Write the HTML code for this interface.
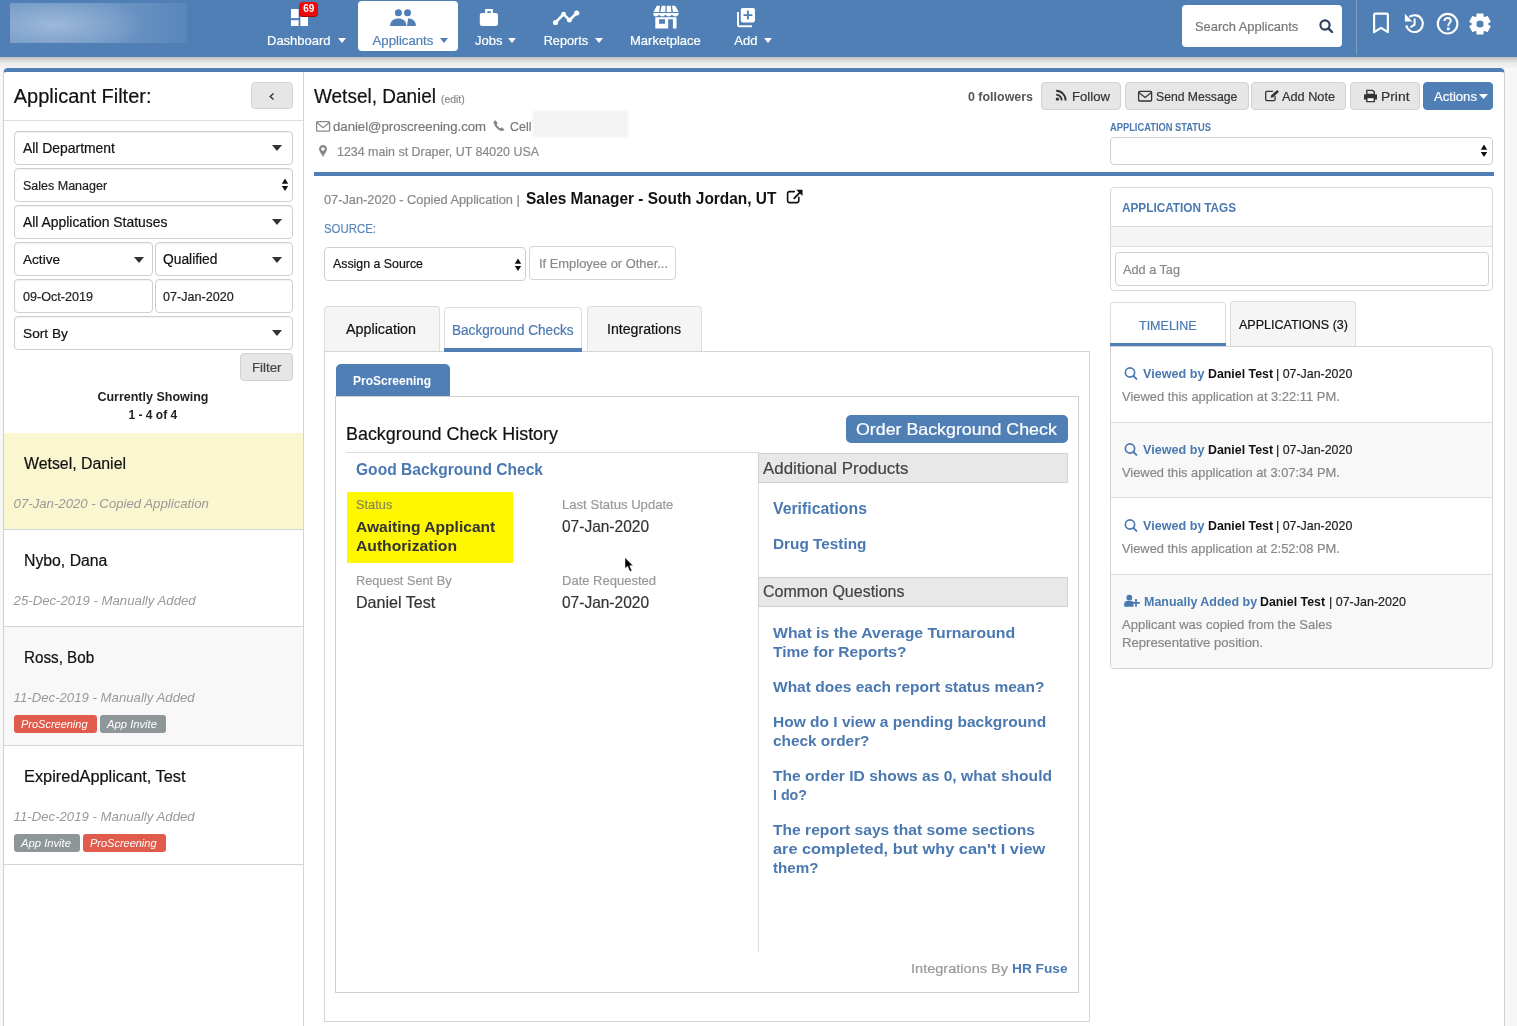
<!DOCTYPE html><html><head><meta charset="utf-8"><style>
div{-webkit-text-stroke:0.2px currentColor}
body{will-change:transform}
html,body{margin:0;padding:0;width:1517px;height:1026px;overflow:hidden;background:#f7f7f7;font-family:"Liberation Sans",sans-serif;position:relative}
</style></head><body>
<div style="position:absolute;left:0px;top:0px;width:1517px;height:57px;background:#4f7fb5"></div>
<div style="position:absolute;left:0px;top:57px;width:1517px;height:11px;background:linear-gradient(#c2c2c2,#ececec 60%,#f3f3f3)"></div>
<div style="position:absolute;left:10px;top:3px;width:177px;height:40px;background:radial-gradient(ellipse 90px 30px at 45px 22px,rgba(200,215,235,0.55),rgba(170,195,225,0.35) 60%,rgba(140,175,215,0.12) 100%),linear-gradient(90deg,rgba(180,200,230,0.3),rgba(160,185,220,0.3) 60%,rgba(120,160,210,0.05))"></div>
<div style="position:absolute;left:3px;top:68px;width:1502px;height:958px;background:#fff;border-top:4px solid #4f7fb5;border-left:1px solid #d0d0d0;border-right:1px solid #d0d0d0;border-radius:5px 5px 0 0;box-sizing:border-box"></div>
<div style="position:absolute;left:358px;top:1px;width:100px;height:50px;background:#fff;border-radius:4px"></div>
<div style="position:absolute;left:267px;top:34.00px;font-size:13px;line-height:13px;color:#fff;font-weight:normal;font-style:normal;white-space:nowrap;font-family:'Liberation Sans', sans-serif;">Dashboard</div>
<svg style="position:absolute;left:337.5px;top:38px;" width="8" height="5" viewBox="0 0 8 5"><path d="M0 0H8L4.0 5Z" fill="#fff"/></svg>
<div style="position:absolute;left:372.5px;top:34.00px;font-size:13.2px;line-height:13.2px;color:#4f7fb5;font-weight:normal;font-style:normal;white-space:nowrap;font-family:'Liberation Sans', sans-serif;">Applicants</div>
<svg style="position:absolute;left:440px;top:38px;" width="8" height="5" viewBox="0 0 8 5"><path d="M0 0H8L4.0 5Z" fill="#4f7fb5"/></svg>
<div style="position:absolute;left:475px;top:34.00px;font-size:13px;line-height:13px;color:#fff;font-weight:normal;font-style:normal;white-space:nowrap;font-family:'Liberation Sans', sans-serif;">Jobs</div>
<svg style="position:absolute;left:508px;top:38px;" width="8" height="5" viewBox="0 0 8 5"><path d="M0 0H8L4.0 5Z" fill="#fff"/></svg>
<div style="position:absolute;left:543.7px;top:35.00px;font-size:12.7px;line-height:12.7px;color:#fff;font-weight:normal;font-style:normal;white-space:nowrap;font-family:'Liberation Sans', sans-serif;">Reports</div>
<svg style="position:absolute;left:594.5px;top:38px;" width="8" height="5" viewBox="0 0 8 5"><path d="M0 0H8L4.0 5Z" fill="#fff"/></svg>
<div style="position:absolute;left:630px;top:34.00px;font-size:13px;line-height:13px;color:#fff;font-weight:normal;font-style:normal;white-space:nowrap;font-family:'Liberation Sans', sans-serif;">Marketplace</div>
<div style="position:absolute;left:734.3px;top:34.00px;font-size:13px;line-height:13px;color:#fff;font-weight:normal;font-style:normal;white-space:nowrap;font-family:'Liberation Sans', sans-serif;">Add</div>
<svg style="position:absolute;left:763.5px;top:38px;" width="8" height="5" viewBox="0 0 8 5"><path d="M0 0H8L4.0 5Z" fill="#fff"/></svg>
<div style="position:absolute;left:1182px;top:5px;width:160px;height:42px;background:#fff;border-radius:4px"></div>
<div style="position:absolute;left:1195px;top:21.00px;font-size:12.9px;line-height:12.9px;color:#777;font-weight:normal;font-style:normal;white-space:nowrap;font-family:'Liberation Sans', sans-serif;">Search Applicants</div>
<div style="position:absolute;left:1356px;top:0px;width:1px;height:55px;background:rgba(255,255,255,0.25)"></div>
<div style="position:absolute;left:303px;top:72px;width:1px;height:954px;background:#d5d5d5"></div>
<div style="position:absolute;left:13.7px;top:86.00px;font-size:20px;line-height:20px;color:#111;font-weight:normal;font-style:normal;white-space:nowrap;font-family:'Liberation Sans', sans-serif;">Applicant Filter:</div>
<div style="position:absolute;left:251px;top:82px;width:42px;height:27px;background:#e6e6e6;border:1px solid #d4d4d4;border-radius:4px;box-sizing:border-box"></div>
<div style="position:absolute;left:4px;top:120px;width:299px;height:1px;background:#ddd"></div>
<div style="position:absolute;left:14px;top:131px;width:279px;height:34px;background:#fff;border:1px solid #cfcfcf;border-radius:4px;box-sizing:border-box;box-shadow:inset 0 1px 1px rgba(0,0,0,0.06)"></div>
<div style="position:absolute;left:23px;top:142.00px;font-size:13.9px;line-height:13.9px;color:#111;font-weight:normal;font-style:normal;white-space:nowrap;font-family:'Liberation Sans', sans-serif;">All Department</div>
<svg style="position:absolute;left:271.5px;top:145px;" width="10" height="6" viewBox="0 0 10 6"><path d="M0 0H10L5.0 6Z" fill="#333"/></svg>
<div style="position:absolute;left:14px;top:168px;width:279px;height:34px;background:#fff;border:1px solid #cfcfcf;border-radius:4px;box-sizing:border-box;box-shadow:inset 0 1px 1px rgba(0,0,0,0.06)"></div>
<div style="position:absolute;left:23px;top:180.00px;font-size:12.5px;line-height:12.5px;color:#222;font-weight:normal;font-style:normal;white-space:nowrap;font-family:'Liberation Sans', sans-serif;">Sales Manager</div>
<div style="position:absolute;left:14px;top:205px;width:279px;height:34px;background:#fff;border:1px solid #cfcfcf;border-radius:4px;box-sizing:border-box;box-shadow:inset 0 1px 1px rgba(0,0,0,0.06)"></div>
<div style="position:absolute;left:23px;top:216.00px;font-size:13.9px;line-height:13.9px;color:#111;font-weight:normal;font-style:normal;white-space:nowrap;font-family:'Liberation Sans', sans-serif;">All Application Statuses</div>
<svg style="position:absolute;left:271.5px;top:219px;" width="10" height="6" viewBox="0 0 10 6"><path d="M0 0H10L5.0 6Z" fill="#333"/></svg>
<div style="position:absolute;left:14px;top:242px;width:139px;height:34px;background:#fff;border:1px solid #cfcfcf;border-radius:4px;box-sizing:border-box;box-shadow:inset 0 1px 1px rgba(0,0,0,0.06)"></div>
<div style="position:absolute;left:23px;top:253.00px;font-size:13.6px;line-height:13.6px;color:#111;font-weight:normal;font-style:normal;white-space:nowrap;font-family:'Liberation Sans', sans-serif;">Active</div>
<svg style="position:absolute;left:133.5px;top:256.5px;" width="10" height="6" viewBox="0 0 10 6"><path d="M0 0H10L5.0 6Z" fill="#333"/></svg>
<div style="position:absolute;left:155px;top:242px;width:138px;height:34px;background:#fff;border:1px solid #cfcfcf;border-radius:4px;box-sizing:border-box;box-shadow:inset 0 1px 1px rgba(0,0,0,0.06)"></div>
<div style="position:absolute;left:163px;top:253.00px;font-size:13.8px;line-height:13.8px;color:#111;font-weight:normal;font-style:normal;white-space:nowrap;font-family:'Liberation Sans', sans-serif;">Qualified</div>
<svg style="position:absolute;left:271.5px;top:256.5px;" width="10" height="6" viewBox="0 0 10 6"><path d="M0 0H10L5.0 6Z" fill="#333"/></svg>
<div style="position:absolute;left:14px;top:279px;width:139px;height:34px;background:#fff;border:1px solid #cfcfcf;border-radius:4px;box-sizing:border-box;box-shadow:inset 0 1px 1px rgba(0,0,0,0.06)"></div>
<div style="position:absolute;left:23px;top:291.00px;font-size:12.6px;line-height:12.6px;color:#222;font-weight:normal;font-style:normal;white-space:nowrap;font-family:'Liberation Sans', sans-serif;">09-Oct-2019</div>
<div style="position:absolute;left:155px;top:279px;width:138px;height:34px;background:#fff;border:1px solid #cfcfcf;border-radius:4px;box-sizing:border-box;box-shadow:inset 0 1px 1px rgba(0,0,0,0.06)"></div>
<div style="position:absolute;left:163px;top:291.00px;font-size:12.6px;line-height:12.6px;color:#222;font-weight:normal;font-style:normal;white-space:nowrap;font-family:'Liberation Sans', sans-serif;">07-Jan-2020</div>
<div style="position:absolute;left:14px;top:316px;width:279px;height:34px;background:#fff;border:1px solid #cfcfcf;border-radius:4px;box-sizing:border-box;box-shadow:inset 0 1px 1px rgba(0,0,0,0.06)"></div>
<div style="position:absolute;left:23px;top:327.00px;font-size:13.7px;line-height:13.7px;color:#111;font-weight:normal;font-style:normal;white-space:nowrap;font-family:'Liberation Sans', sans-serif;">Sort By</div>
<svg style="position:absolute;left:271.5px;top:330px;" width="10" height="6" viewBox="0 0 10 6"><path d="M0 0H10L5.0 6Z" fill="#333"/></svg>
<div style="position:absolute;left:240px;top:353px;width:53px;height:28px;background:#e6e6e6;border:1px solid #d0d0d0;border-radius:4px;box-sizing:border-box"></div>
<div style="position:absolute;left:252px;top:361.00px;font-size:13.3px;line-height:13.3px;color:#444;font-weight:normal;font-style:normal;white-space:nowrap;font-family:'Liberation Sans', sans-serif;">Filter</div>
<div style="position:absolute;left:97.4px;top:391.00px;font-size:12.5px;line-height:12.5px;color:#222;font-weight:bold;font-style:normal;-webkit-text-stroke:0;white-space:nowrap;font-family:'Liberation Sans', sans-serif;">Currently Showing</div>
<div style="position:absolute;left:128.5px;top:409.00px;font-size:12px;line-height:12px;color:#222;font-weight:bold;font-style:normal;-webkit-text-stroke:0;white-space:nowrap;font-family:'Liberation Sans', sans-serif;">1 - 4 of 4</div>
<div style="position:absolute;left:4px;top:433px;width:299px;height:96px;background:#faf6cf"></div>
<div style="position:absolute;left:4px;top:529px;width:299px;height:1px;background:#d5d5d5"></div>
<div style="position:absolute;left:4px;top:626px;width:299px;height:1px;background:#d5d5d5"></div>
<div style="position:absolute;left:4px;top:627px;width:299px;height:118px;background:#f8f8f8"></div>
<div style="position:absolute;left:4px;top:745px;width:299px;height:1px;background:#d5d5d5"></div>
<div style="position:absolute;left:4px;top:864px;width:299px;height:1px;background:#d5d5d5"></div>
<div style="position:absolute;left:23.8px;top:456.00px;font-size:16px;line-height:16px;color:#111;font-weight:normal;font-style:normal;white-space:nowrap;font-family:'Liberation Sans', sans-serif;transform:scaleX(0.9916);transform-origin:0 0;">Wetsel, Daniel</div>
<div style="position:absolute;left:13.6px;top:497.00px;font-size:13.2px;line-height:13.2px;color:#999;font-weight:normal;font-style:italic;-webkit-text-stroke:0;white-space:nowrap;font-family:'Liberation Sans', sans-serif;">07-Jan-2020 - Copied Application</div>
<div style="position:absolute;left:23.8px;top:553.00px;font-size:16px;line-height:16px;color:#111;font-weight:normal;font-style:normal;white-space:nowrap;font-family:'Liberation Sans', sans-serif;transform:scaleX(0.9871);transform-origin:0 0;">Nybo, Dana</div>
<div style="position:absolute;left:13.6px;top:594.00px;font-size:13.2px;line-height:13.2px;color:#999;font-weight:normal;font-style:italic;-webkit-text-stroke:0;white-space:nowrap;font-family:'Liberation Sans', sans-serif;">25-Dec-2019 - Manually Added</div>
<div style="position:absolute;left:23.8px;top:650.00px;font-size:16px;line-height:16px;color:#111;font-weight:normal;font-style:normal;white-space:nowrap;font-family:'Liberation Sans', sans-serif;transform:scaleX(0.9510);transform-origin:0 0;">Ross, Bob</div>
<div style="position:absolute;left:13.6px;top:691.00px;font-size:13.2px;line-height:13.2px;color:#999;font-weight:normal;font-style:italic;-webkit-text-stroke:0;white-space:nowrap;font-family:'Liberation Sans', sans-serif;">11-Dec-2019 - Manually Added</div>
<div style="position:absolute;left:23.8px;top:769.00px;font-size:16px;line-height:16px;color:#111;font-weight:normal;font-style:normal;white-space:nowrap;font-family:'Liberation Sans', sans-serif;transform:scaleX(1.0227);transform-origin:0 0;">ExpiredApplicant, Test</div>
<div style="position:absolute;left:13.6px;top:810.00px;font-size:13.2px;line-height:13.2px;color:#999;font-weight:normal;font-style:italic;-webkit-text-stroke:0;white-space:nowrap;font-family:'Liberation Sans', sans-serif;">11-Dec-2019 - Manually Added</div>
<div style="position:absolute;left:14px;top:715px;width:83px;height:18px;background:#e15b4d;border-radius:3px"></div>
<div style="position:absolute;left:21.3px;top:719.00px;font-size:11.5px;line-height:11.5px;color:#fff;font-weight:normal;font-style:italic;-webkit-text-stroke:0;white-space:nowrap;font-family:'Liberation Sans', sans-serif;transform:scaleX(0.9543);transform-origin:0 0;">ProScreening</div>
<div style="position:absolute;left:100px;top:715px;width:66px;height:18px;background:#8f9697;border-radius:3px"></div>
<div style="position:absolute;left:107.3px;top:719.00px;font-size:11.5px;line-height:11.5px;color:#fff;font-weight:normal;font-style:italic;-webkit-text-stroke:0;white-space:nowrap;font-family:'Liberation Sans', sans-serif;transform:scaleX(0.9776);transform-origin:0 0;">App Invite</div>
<div style="position:absolute;left:14px;top:834px;width:66px;height:18px;background:#8f9697;border-radius:3px"></div>
<div style="position:absolute;left:21.3px;top:838.00px;font-size:11.5px;line-height:11.5px;color:#fff;font-weight:normal;font-style:italic;-webkit-text-stroke:0;white-space:nowrap;font-family:'Liberation Sans', sans-serif;transform:scaleX(0.9776);transform-origin:0 0;">App Invite</div>
<div style="position:absolute;left:83px;top:834px;width:83px;height:18px;background:#e15b4d;border-radius:3px"></div>
<div style="position:absolute;left:90.3px;top:838.00px;font-size:11.5px;line-height:11.5px;color:#fff;font-weight:normal;font-style:italic;-webkit-text-stroke:0;white-space:nowrap;font-family:'Liberation Sans', sans-serif;transform:scaleX(0.9543);transform-origin:0 0;">ProScreening</div>
<div style="position:absolute;left:314.2px;top:87.00px;font-size:19.5px;line-height:19.5px;color:#111;font-weight:normal;font-style:normal;white-space:nowrap;font-family:'Liberation Sans', sans-serif;transform:scaleX(0.9732);transform-origin:0 0;">Wetsel, Daniel</div>
<div style="position:absolute;left:441.4px;top:94.00px;font-size:11px;line-height:11px;color:#888;font-weight:normal;font-style:normal;white-space:nowrap;font-family:'Liberation Sans', sans-serif;transform:scaleX(0.9416);transform-origin:0 0;">(edit)</div>
<div style="position:absolute;left:333.2px;top:120.00px;font-size:13.5px;line-height:13.5px;color:#777;font-weight:normal;font-style:normal;white-space:nowrap;font-family:'Liberation Sans', sans-serif;transform:scaleX(0.9743);transform-origin:0 0;">daniel@proscreening.com</div>
<div style="position:absolute;left:509.6px;top:120.00px;font-size:13px;line-height:13px;color:#777;font-weight:normal;font-style:normal;white-space:nowrap;font-family:'Liberation Sans', sans-serif;transform:scaleX(0.9555);transform-origin:0 0;">Cell</div>
<div style="position:absolute;left:533px;top:111px;width:95px;height:26px;background:#f3f3f3;filter:blur(1px)"></div>
<div style="position:absolute;left:336.6px;top:145.00px;font-size:13px;line-height:13px;color:#888;font-weight:normal;font-style:normal;white-space:nowrap;font-family:'Liberation Sans', sans-serif;transform:scaleX(0.9551);transform-origin:0 0;">1234 main st Draper, UT 84020 USA</div>
<div style="position:absolute;left:314px;top:172px;width:1180px;height:4px;background:#4f7fb5"></div>
<div style="position:absolute;left:967.8px;top:91.00px;font-size:12.8px;line-height:12.8px;color:#555;font-weight:bold;font-style:normal;-webkit-text-stroke:0;white-space:nowrap;font-family:'Liberation Sans', sans-serif;transform:scaleX(0.9721);transform-origin:0 0;">0 followers</div>
<div style="position:absolute;left:1041px;top:82px;width:80px;height:28px;background:#e6e6e6;border:1px solid #d2d2d2;border-radius:4px;box-sizing:border-box"></div>
<div style="position:absolute;left:1072px;top:90.00px;font-size:13.2px;line-height:13.2px;color:#333;font-weight:normal;font-style:normal;white-space:nowrap;font-family:'Liberation Sans', sans-serif;transform:scaleX(0.9962);transform-origin:0 0;">Follow</div>
<div style="position:absolute;left:1125px;top:82px;width:124px;height:28px;background:#e6e6e6;border:1px solid #d2d2d2;border-radius:4px;box-sizing:border-box"></div>
<div style="position:absolute;left:1155.7px;top:90.00px;font-size:13px;line-height:13px;color:#333;font-weight:normal;font-style:normal;white-space:nowrap;font-family:'Liberation Sans', sans-serif;transform:scaleX(0.9375);transform-origin:0 0;">Send Message</div>
<div style="position:absolute;left:1251px;top:82px;width:95px;height:28px;background:#e6e6e6;border:1px solid #d2d2d2;border-radius:4px;box-sizing:border-box"></div>
<div style="position:absolute;left:1282.4px;top:90.00px;font-size:13px;line-height:13px;color:#333;font-weight:normal;font-style:normal;white-space:nowrap;font-family:'Liberation Sans', sans-serif;transform:scaleX(0.9778);transform-origin:0 0;">Add Note</div>
<div style="position:absolute;left:1350px;top:82px;width:70px;height:28px;background:#e6e6e6;border:1px solid #d2d2d2;border-radius:4px;box-sizing:border-box"></div>
<div style="position:absolute;left:1380.6px;top:90.00px;font-size:13px;line-height:13px;color:#333;font-weight:normal;font-style:normal;white-space:nowrap;font-family:'Liberation Sans', sans-serif;transform:scaleX(1.0662);transform-origin:0 0;">Print</div>
<div style="position:absolute;left:1423px;top:82px;width:70px;height:28px;background:#4f7fb5;border:1px solid #4f7fb5;border-radius:4px;box-sizing:border-box"></div>
<div style="position:absolute;left:1433.5px;top:90.00px;font-size:13.2px;line-height:13.2px;color:#fff;font-weight:normal;font-style:normal;white-space:nowrap;font-family:'Liberation Sans', sans-serif;transform:scaleX(0.9934);transform-origin:0 0;">Actions</div>
<svg style="position:absolute;left:1478.5px;top:94px;" width="9" height="5" viewBox="0 0 9 5"><path d="M0 0H9L4.5 5Z" fill="#fff"/></svg>
<div style="position:absolute;left:1110.2px;top:122.00px;font-size:11px;line-height:11px;color:#4a78b0;font-weight:bold;font-style:normal;-webkit-text-stroke:0;white-space:nowrap;font-family:'Liberation Sans', sans-serif;transform:scaleX(0.8476);transform-origin:0 0;">APPLICATION STATUS</div>
<div style="position:absolute;left:1110px;top:137px;width:383px;height:28px;background:#fff;border:1px solid #cfcfcf;border-radius:4px;box-sizing:border-box"></div>
<div style="position:absolute;left:324.2px;top:193.00px;font-size:13.2px;line-height:13.2px;color:#888;font-weight:normal;font-style:normal;white-space:nowrap;font-family:'Liberation Sans', sans-serif;transform:scaleX(0.9689);transform-origin:0 0;">07-Jan-2020 - Copied Application |</div>
<div style="position:absolute;left:526px;top:190.00px;font-size:16.5px;line-height:16.5px;color:#111;font-weight:bold;font-style:normal;-webkit-text-stroke:0;white-space:nowrap;font-family:'Liberation Sans', sans-serif;transform:scaleX(0.9353);transform-origin:0 0;">Sales Manager - South Jordan, UT</div>
<div style="position:absolute;left:324.2px;top:222.00px;font-size:13.5px;line-height:13.5px;color:#5a85b8;font-weight:normal;font-style:normal;white-space:nowrap;font-family:'Liberation Sans', sans-serif;transform:scaleX(0.8454);transform-origin:0 0;">SOURCE:</div>
<div style="position:absolute;left:324px;top:247px;width:202px;height:34px;background:#fff;border:1px solid #cfcfcf;border-radius:4px;box-sizing:border-box"></div>
<div style="position:absolute;left:333px;top:257.00px;font-size:13px;line-height:13px;color:#111;font-weight:normal;font-style:normal;white-space:nowrap;font-family:'Liberation Sans', sans-serif;transform:scaleX(0.9507);transform-origin:0 0;">Assign a Source</div>
<div style="position:absolute;left:529px;top:246px;width:147px;height:34px;background:#fff;border:1px solid #d5d5d5;border-radius:4px;box-sizing:border-box"></div>
<div style="position:absolute;left:538.5px;top:257.00px;font-size:13px;line-height:13px;color:#888;font-weight:normal;font-style:normal;white-space:nowrap;font-family:'Liberation Sans', sans-serif;transform:scaleX(0.9919);transform-origin:0 0;">If Employee or Other...</div>
<div style="position:absolute;left:324px;top:306px;width:116px;height:46px;background:#f5f5f5;border:1px solid #ddd;border-bottom:none;border-radius:4px 4px 0 0;box-sizing:border-box"></div>
<div style="position:absolute;left:346px;top:322.00px;font-size:14px;line-height:14px;color:#111;font-weight:normal;font-style:normal;white-space:nowrap;font-family:'Liberation Sans', sans-serif;transform:scaleX(1.0220);transform-origin:0 0;">Application</div>
<div style="position:absolute;left:444px;top:307px;width:138px;height:45px;background:#fff;border:1px solid #ddd;border-bottom:none;border-radius:4px 4px 0 0;box-sizing:border-box"></div>
<div style="position:absolute;left:444px;top:348px;width:138px;height:4px;background:#4f7fb5"></div>
<div style="position:absolute;left:452px;top:323.00px;font-size:14px;line-height:14px;color:#4a78b0;font-weight:normal;font-style:normal;white-space:nowrap;font-family:'Liberation Sans', sans-serif;transform:scaleX(0.9697);transform-origin:0 0;">Background Checks</div>
<div style="position:absolute;left:587px;top:306px;width:115px;height:46px;background:#f5f5f5;border:1px solid #ddd;border-bottom:none;border-radius:4px 4px 0 0;box-sizing:border-box"></div>
<div style="position:absolute;left:607px;top:322.00px;font-size:14px;line-height:14px;color:#111;font-weight:normal;font-style:normal;white-space:nowrap;font-family:'Liberation Sans', sans-serif;transform:scaleX(1.0115);transform-origin:0 0;">Integrations</div>
<div style="position:absolute;left:324px;top:351px;width:766px;height:671px;border:1px solid #d5d5d5;box-sizing:border-box"></div>
<div style="position:absolute;left:444px;top:351px;width:138px;height:1px;background:#4f7fb5"></div>
<div style="position:absolute;left:335.5px;top:364px;width:114.5px;height:33px;background:#4f7fb5;border-radius:5px 5px 0 0"></div>
<div style="position:absolute;left:353.2px;top:375.00px;font-size:12.5px;line-height:12.5px;color:#fff;font-weight:bold;font-style:normal;-webkit-text-stroke:0;white-space:nowrap;font-family:'Liberation Sans', sans-serif;transform:scaleX(0.9597);transform-origin:0 0;">ProScreening</div>
<div style="position:absolute;left:335px;top:396px;width:744px;height:597px;border:1px solid #d0d0d0;box-sizing:border-box"></div>
<div style="position:absolute;left:450px;top:396px;width:629px;height:1px;background:#d0d0d0"></div>
<div style="position:absolute;left:346px;top:426.00px;font-size:17.5px;line-height:17.5px;color:#111;font-weight:normal;font-style:normal;white-space:nowrap;font-family:'Liberation Sans', sans-serif;transform:scaleX(1.0233);transform-origin:0 0;">Background Check History</div>
<div style="position:absolute;left:346px;top:452px;width:413px;height:1px;background:#ddd"></div>
<div style="position:absolute;left:355.7px;top:462.00px;font-size:16px;line-height:16px;color:#4a78b0;font-weight:bold;font-style:normal;-webkit-text-stroke:0;white-space:nowrap;font-family:'Liberation Sans', sans-serif;transform:scaleX(0.9738);transform-origin:0 0;">Good Background Check</div>
<div style="position:absolute;left:347px;top:492px;width:166px;height:71px;background:#fff700"></div>
<div style="position:absolute;left:355.7px;top:498.00px;font-size:13px;line-height:13px;color:#8a8a55;font-weight:normal;font-style:normal;white-space:nowrap;font-family:'Liberation Sans', sans-serif;transform:scaleX(0.9849);transform-origin:0 0;">Status</div>
<div style="position:absolute;left:355.7px;top:519.00px;font-size:15.5px;line-height:15.5px;color:#333;font-weight:bold;font-style:normal;-webkit-text-stroke:0;white-space:nowrap;font-family:'Liberation Sans', sans-serif;transform:scaleX(1.0047);transform-origin:0 0;">Awaiting Applicant</div>
<div style="position:absolute;left:355.7px;top:538.00px;font-size:15.5px;line-height:15.5px;color:#333;font-weight:bold;font-style:normal;-webkit-text-stroke:0;white-space:nowrap;font-family:'Liberation Sans', sans-serif;transform:scaleX(1.0113);transform-origin:0 0;">Authorization</div>
<div style="position:absolute;left:561.6px;top:498.00px;font-size:13px;line-height:13px;color:#999;font-weight:normal;font-style:normal;white-space:nowrap;font-family:'Liberation Sans', sans-serif;transform:scaleX(1.0075);transform-origin:0 0;">Last Status Update</div>
<div style="position:absolute;left:561.6px;top:518.00px;font-size:16.5px;line-height:16.5px;color:#333;font-weight:normal;font-style:normal;white-space:nowrap;font-family:'Liberation Sans', sans-serif;transform:scaleX(0.9390);transform-origin:0 0;">07-Jan-2020</div>
<div style="position:absolute;left:355.7px;top:574.00px;font-size:13px;line-height:13px;color:#999;font-weight:normal;font-style:normal;white-space:nowrap;font-family:'Liberation Sans', sans-serif;transform:scaleX(0.9789);transform-origin:0 0;">Request Sent By</div>
<div style="position:absolute;left:355.7px;top:594.00px;font-size:16.5px;line-height:16.5px;color:#333;font-weight:normal;font-style:normal;white-space:nowrap;font-family:'Liberation Sans', sans-serif;transform:scaleX(0.9751);transform-origin:0 0;">Daniel Test</div>
<div style="position:absolute;left:561.6px;top:574.00px;font-size:13px;line-height:13px;color:#999;font-weight:normal;font-style:normal;white-space:nowrap;font-family:'Liberation Sans', sans-serif;transform:scaleX(1.0005);transform-origin:0 0;">Date Requested</div>
<div style="position:absolute;left:561.6px;top:594.00px;font-size:16.5px;line-height:16.5px;color:#333;font-weight:normal;font-style:normal;white-space:nowrap;font-family:'Liberation Sans', sans-serif;transform:scaleX(0.9390);transform-origin:0 0;">07-Jan-2020</div>
<div style="position:absolute;left:846px;top:415px;width:222px;height:28px;background:#4f7fb5;border-radius:5px"></div>
<div style="position:absolute;left:855.8px;top:421.00px;font-size:16.5px;line-height:16.5px;color:#fff;font-weight:normal;font-style:normal;white-space:nowrap;font-family:'Liberation Sans', sans-serif;transform:scaleX(1.0785);transform-origin:0 0;">Order Background Check</div>
<div style="position:absolute;left:758px;top:453px;width:1px;height:499px;background:#ddd"></div>
<div style="position:absolute;left:758px;top:453px;width:310px;height:30px;background:#e8e8e8;border:1px solid #d0d0d0;box-sizing:border-box"></div>
<div style="position:absolute;left:763px;top:460.00px;font-size:16.5px;line-height:16.5px;color:#444;font-weight:normal;font-style:normal;white-space:nowrap;font-family:'Liberation Sans', sans-serif;transform:scaleX(1.0227);transform-origin:0 0;">Additional Products</div>
<div style="position:absolute;left:773px;top:501.00px;font-size:15.7px;line-height:15.7px;color:#4a78b0;font-weight:bold;font-style:normal;-webkit-text-stroke:0;white-space:nowrap;font-family:'Liberation Sans', sans-serif;transform:scaleX(1.0068);transform-origin:0 0;">Verifications</div>
<div style="position:absolute;left:773px;top:536.00px;font-size:15.5px;line-height:15.5px;color:#4a78b0;font-weight:bold;font-style:normal;-webkit-text-stroke:0;white-space:nowrap;font-family:'Liberation Sans', sans-serif;transform:scaleX(0.9901);transform-origin:0 0;">Drug Testing</div>
<div style="position:absolute;left:758px;top:577px;width:310px;height:30px;background:#e8e8e8;border:1px solid #d0d0d0;box-sizing:border-box"></div>
<div style="position:absolute;left:763px;top:583.00px;font-size:16.5px;line-height:16.5px;color:#444;font-weight:normal;font-style:normal;white-space:nowrap;font-family:'Liberation Sans', sans-serif;transform:scaleX(0.9704);transform-origin:0 0;">Common Questions</div>
<div style="position:absolute;left:772.8px;top:625.00px;font-size:15.5px;line-height:15.5px;color:#4a78b0;font-weight:bold;font-style:normal;-webkit-text-stroke:0;white-space:nowrap;font-family:'Liberation Sans', sans-serif;transform:scaleX(1.0214);transform-origin:0 0;">What is the Average Turnaround</div>
<div style="position:absolute;left:772.8px;top:644.00px;font-size:15.5px;line-height:15.5px;color:#4a78b0;font-weight:bold;font-style:normal;-webkit-text-stroke:0;white-space:nowrap;font-family:'Liberation Sans', sans-serif;transform:scaleX(1.0022);transform-origin:0 0;">Time for Reports?</div>
<div style="position:absolute;left:772.8px;top:679.00px;font-size:15.5px;line-height:15.5px;color:#4a78b0;font-weight:bold;font-style:normal;-webkit-text-stroke:0;white-space:nowrap;font-family:'Liberation Sans', sans-serif;transform:scaleX(1.0003);transform-origin:0 0;">What does each report status mean?</div>
<div style="position:absolute;left:772.8px;top:714.00px;font-size:15.5px;line-height:15.5px;color:#4a78b0;font-weight:bold;font-style:normal;-webkit-text-stroke:0;white-space:nowrap;font-family:'Liberation Sans', sans-serif;transform:scaleX(1.0008);transform-origin:0 0;">How do I view a pending background</div>
<div style="position:absolute;left:772.8px;top:733.00px;font-size:15.5px;line-height:15.5px;color:#4a78b0;font-weight:bold;font-style:normal;-webkit-text-stroke:0;white-space:nowrap;font-family:'Liberation Sans', sans-serif;transform:scaleX(0.9913);transform-origin:0 0;">check order?</div>
<div style="position:absolute;left:772.8px;top:768.00px;font-size:15.5px;line-height:15.5px;color:#4a78b0;font-weight:bold;font-style:normal;-webkit-text-stroke:0;white-space:nowrap;font-family:'Liberation Sans', sans-serif;transform:scaleX(1.0060);transform-origin:0 0;">The order ID shows as 0, what should</div>
<div style="position:absolute;left:772.8px;top:787.00px;font-size:15.5px;line-height:15.5px;color:#4a78b0;font-weight:bold;font-style:normal;-webkit-text-stroke:0;white-space:nowrap;font-family:'Liberation Sans', sans-serif;transform:scaleX(0.9185);transform-origin:0 0;">I do?</div>
<div style="position:absolute;left:772.8px;top:822.00px;font-size:15.5px;line-height:15.5px;color:#4a78b0;font-weight:bold;font-style:normal;-webkit-text-stroke:0;white-space:nowrap;font-family:'Liberation Sans', sans-serif;transform:scaleX(1.0071);transform-origin:0 0;">The report says that some sections</div>
<div style="position:absolute;left:772.8px;top:841.00px;font-size:15.5px;line-height:15.5px;color:#4a78b0;font-weight:bold;font-style:normal;-webkit-text-stroke:0;white-space:nowrap;font-family:'Liberation Sans', sans-serif;transform:scaleX(1.0524);transform-origin:0 0;">are completed, but why can't I view</div>
<div style="position:absolute;left:772.8px;top:860.00px;font-size:15.5px;line-height:15.5px;color:#4a78b0;font-weight:bold;font-style:normal;-webkit-text-stroke:0;white-space:nowrap;font-family:'Liberation Sans', sans-serif;transform:scaleX(0.9785);transform-origin:0 0;">them?</div>
<div style="position:absolute;left:911px;top:962.00px;font-size:13.5px;line-height:13.5px;color:#999;font-weight:normal;font-style:normal;white-space:nowrap;font-family:'Liberation Sans', sans-serif;transform:scaleX(1.0772);transform-origin:0 0;">Integrations By</div>
<div style="position:absolute;left:1011.5px;top:962.00px;font-size:13.5px;line-height:13.5px;color:#4a78b0;font-weight:bold;font-style:normal;-webkit-text-stroke:0;white-space:nowrap;font-family:'Liberation Sans', sans-serif;transform:scaleX(1.0135);transform-origin:0 0;">HR Fuse</div>
<div style="position:absolute;left:1110px;top:187px;width:383px;height:104px;border:1px solid #d8d8d8;border-radius:4px;box-sizing:border-box"></div>
<div style="position:absolute;left:1122.4px;top:201.00px;font-size:13px;line-height:13px;color:#4a78b0;font-weight:bold;font-style:normal;-webkit-text-stroke:0;white-space:nowrap;font-family:'Liberation Sans', sans-serif;transform:scaleX(0.9054);transform-origin:0 0;">APPLICATION TAGS</div>
<div style="position:absolute;left:1111px;top:226px;width:381px;height:21px;background:#f5f5f5;border-top:1px solid #ddd;border-bottom:1px solid #ddd;box-sizing:border-box"></div>
<div style="position:absolute;left:1114.5px;top:252px;width:374.5px;height:34px;background:#fff;border:1px solid #d0d0d0;border-radius:4px;box-sizing:border-box"></div>
<div style="position:absolute;left:1123.2px;top:263.00px;font-size:13px;line-height:13px;color:#888;font-weight:normal;font-style:normal;white-space:nowrap;font-family:'Liberation Sans', sans-serif;transform:scaleX(0.9775);transform-origin:0 0;">Add a Tag</div>
<div style="position:absolute;left:1110px;top:302px;width:116px;height:45px;background:#fff;border:1px solid #ddd;border-bottom:none;border-radius:4px 4px 0 0;box-sizing:border-box"></div>
<div style="position:absolute;left:1110px;top:343px;width:116px;height:4px;background:#4f7fb5"></div>
<div style="position:absolute;left:1139.3px;top:319.00px;font-size:13px;line-height:13px;color:#4a78b0;font-weight:normal;font-style:normal;white-space:nowrap;font-family:'Liberation Sans', sans-serif;transform:scaleX(0.9624);transform-origin:0 0;">TIMELINE</div>
<div style="position:absolute;left:1230px;top:301px;width:126px;height:46px;background:#f5f5f5;border:1px solid #ddd;border-bottom:none;border-radius:4px 4px 0 0;box-sizing:border-box"></div>
<div style="position:absolute;left:1238.6px;top:318.00px;font-size:13px;line-height:13px;color:#111;font-weight:normal;font-style:normal;white-space:nowrap;font-family:'Liberation Sans', sans-serif;transform:scaleX(0.9631);transform-origin:0 0;">APPLICATIONS (3)</div>
<div style="position:absolute;left:1110px;top:346px;width:383px;height:323px;border:1px solid #d5d5d5;border-radius:0 4px 4px 4px;box-sizing:border-box;overflow:hidden"></div>
<div style="position:absolute;left:1111px;top:422px;width:381px;height:76px;background:#f8f8f8;border-top:1px solid #ddd;border-bottom:1px solid #ddd;box-sizing:border-box"></div>
<div style="position:absolute;left:1111px;top:574px;width:381px;height:94px;background:#f8f8f8;border-top:1px solid #ddd;border-radius:0 0 4px 4px;box-sizing:border-box"></div>
<div style="position:absolute;left:1143px;top:367.00px;font-size:13px;line-height:13px;color:#4a78b0;font-weight:bold;font-style:normal;-webkit-text-stroke:0;white-space:nowrap;font-family:'Liberation Sans', sans-serif;transform:scaleX(0.9693);transform-origin:0 0;">Viewed by</div>
<div style="position:absolute;left:1208px;top:367.00px;font-size:13px;line-height:13px;color:#111;font-weight:bold;font-style:normal;-webkit-text-stroke:0;white-space:nowrap;font-family:'Liberation Sans', sans-serif;transform:scaleX(0.9504);transform-origin:0 0;">Daniel Test</div>
<div style="position:absolute;left:1275.8999999999999px;top:367.00px;font-size:13px;line-height:13px;color:#222;font-weight:normal;font-style:normal;white-space:nowrap;font-family:'Liberation Sans', sans-serif;transform:scaleX(0.9539);transform-origin:0 0;">| 07-Jan-2020</div>
<div style="position:absolute;left:1121.5px;top:390.00px;font-size:13px;line-height:13px;color:#888;font-weight:normal;font-style:normal;white-space:nowrap;font-family:'Liberation Sans', sans-serif;transform:scaleX(0.9935);transform-origin:0 0;">Viewed this application at 3:22:11 PM.</div>
<div style="position:absolute;left:1143px;top:443.00px;font-size:13px;line-height:13px;color:#4a78b0;font-weight:bold;font-style:normal;-webkit-text-stroke:0;white-space:nowrap;font-family:'Liberation Sans', sans-serif;transform:scaleX(0.9693);transform-origin:0 0;">Viewed by</div>
<div style="position:absolute;left:1208px;top:443.00px;font-size:13px;line-height:13px;color:#111;font-weight:bold;font-style:normal;-webkit-text-stroke:0;white-space:nowrap;font-family:'Liberation Sans', sans-serif;transform:scaleX(0.9504);transform-origin:0 0;">Daniel Test</div>
<div style="position:absolute;left:1275.8999999999999px;top:443.00px;font-size:13px;line-height:13px;color:#222;font-weight:normal;font-style:normal;white-space:nowrap;font-family:'Liberation Sans', sans-serif;transform:scaleX(0.9539);transform-origin:0 0;">| 07-Jan-2020</div>
<div style="position:absolute;left:1121.5px;top:466.00px;font-size:13px;line-height:13px;color:#888;font-weight:normal;font-style:normal;white-space:nowrap;font-family:'Liberation Sans', sans-serif;transform:scaleX(0.9892);transform-origin:0 0;">Viewed this application at 3:07:34 PM.</div>
<div style="position:absolute;left:1143px;top:519.00px;font-size:13px;line-height:13px;color:#4a78b0;font-weight:bold;font-style:normal;-webkit-text-stroke:0;white-space:nowrap;font-family:'Liberation Sans', sans-serif;transform:scaleX(0.9693);transform-origin:0 0;">Viewed by</div>
<div style="position:absolute;left:1208px;top:519.00px;font-size:13px;line-height:13px;color:#111;font-weight:bold;font-style:normal;-webkit-text-stroke:0;white-space:nowrap;font-family:'Liberation Sans', sans-serif;transform:scaleX(0.9504);transform-origin:0 0;">Daniel Test</div>
<div style="position:absolute;left:1275.8999999999999px;top:519.00px;font-size:13px;line-height:13px;color:#222;font-weight:normal;font-style:normal;white-space:nowrap;font-family:'Liberation Sans', sans-serif;transform:scaleX(0.9539);transform-origin:0 0;">| 07-Jan-2020</div>
<div style="position:absolute;left:1121.5px;top:542.00px;font-size:13px;line-height:13px;color:#888;font-weight:normal;font-style:normal;white-space:nowrap;font-family:'Liberation Sans', sans-serif;transform:scaleX(0.9892);transform-origin:0 0;">Viewed this application at 2:52:08 PM.</div>
<div style="position:absolute;left:1143.7px;top:595.00px;font-size:13px;line-height:13px;color:#4a78b0;font-weight:bold;font-style:normal;-webkit-text-stroke:0;white-space:nowrap;font-family:'Liberation Sans', sans-serif;transform:scaleX(0.9586);transform-origin:0 0;">Manually Added by</div>
<div style="position:absolute;left:1260.4px;top:595.00px;font-size:13px;line-height:13px;color:#111;font-weight:bold;font-style:normal;-webkit-text-stroke:0;white-space:nowrap;font-family:'Liberation Sans', sans-serif;transform:scaleX(0.9504);transform-origin:0 0;">Daniel Test</div>
<div style="position:absolute;left:1328.6px;top:595.00px;font-size:13px;line-height:13px;color:#222;font-weight:normal;font-style:normal;white-space:nowrap;font-family:'Liberation Sans', sans-serif;transform:scaleX(0.9614);transform-origin:0 0;">| 07-Jan-2020</div>
<div style="position:absolute;left:1121.5px;top:618.00px;font-size:13px;line-height:13px;color:#888;font-weight:normal;font-style:normal;white-space:nowrap;font-family:'Liberation Sans', sans-serif;transform:scaleX(1.0016);transform-origin:0 0;">Applicant was copied from the Sales</div>
<div style="position:absolute;left:1121.5px;top:636.00px;font-size:13px;line-height:13px;color:#888;font-weight:normal;font-style:normal;white-space:nowrap;font-family:'Liberation Sans', sans-serif;transform:scaleX(1.0102);transform-origin:0 0;">Representative position.</div>
<svg style="position:absolute;left:288px;top:6px;" width="22" height="22" viewBox="0 0 22 22"><rect x="3" y="3" width="7.6" height="9.1" fill="#fff"/><rect x="3" y="14.2" width="7.6" height="5.8" fill="#fff"/><rect x="12.4" y="10.8" width="7.6" height="9.2" fill="#fff"/></svg>
<div style="position:absolute;left:299px;top:1.5px;width:19px;height:14.0px;background:#ee0a0a;border-radius:4px;box-shadow:0 1px 0 #a00"></div>
<div style="position:absolute;left:303.2px;top:4.00px;font-size:10px;line-height:10px;color:#fff;font-weight:bold;font-style:normal;-webkit-text-stroke:0;white-space:nowrap;font-family:'Liberation Sans', sans-serif;">69</div>
<svg style="position:absolute;left:388px;top:7px;" width="30" height="22" viewBox="0 0 30 22"><circle cx="10.4" cy="5.7" r="3.5" fill="#4f7fb5"/><circle cx="19.5" cy="5.7" r="3.5" fill="#4f7fb5"/><path d="M2.1 18.9 C2.1 13.5 6 11.4 10.3 11.4 C14.6 11.4 18.4 13.5 18.4 18.9Z" fill="#4f7fb5"/><path d="M19.2 18.9 L27.9 18.9 C27.9 13.8 24.5 11.6 19.8 11.6 C20.6 13 19.3 14 19.2 18.9Z" fill="#4f7fb5"/></svg>
<svg style="position:absolute;left:478px;top:7px;" width="22" height="21" viewBox="0 0 22 21"><path d="M7.1 2.1 H14.9 V5.9 H12.8 V4.3 H9.3 V5.9 H7.1Z" fill="#fff"/><rect x="1.8" y="5.9" width="18.2" height="13.1" rx="2.2" fill="#fff"/></svg>
<svg style="position:absolute;left:551px;top:9px;" width="30" height="17" viewBox="0 0 30 17"><polyline points="4.5,13.5 12.6,5.1 18.4,11.2 25.7,4" fill="none" stroke="#fff" stroke-width="2.6" stroke-linejoin="round"/><circle cx="4.5" cy="13.5" r="2.6" fill="#fff"/><circle cx="12.6" cy="5.1" r="2.4" fill="#fff"/><circle cx="18.4" cy="11.2" r="2.4" fill="#fff"/><circle cx="25.7" cy="4" r="2.6" fill="#fff"/></svg>
<svg style="position:absolute;left:652px;top:4px;" width="28" height="26" viewBox="0 0 28 26"><path d="M4.8 1.8 H8 L7.1 8 H1.5Z M9.7 1.8 H13.5 L13.3 8 H8.3Z M14.7 1.8 H18.8 L19.4 8 H14.7Z M20 1.8 H23.2 L26.7 8 H20.9Z" fill="#fff"/><path d="M1.3 9.1 H26.7 C26.9 11.4 25.4 12.4 23.4 12.4 C21.6 12.4 20.4 11.5 19.9 10.5 C19.4 11.5 18.2 12.4 16.6 12.4 C15 12.4 13.8 11.5 13.4 10.5 C12.9 11.5 11.8 12.4 10.2 12.4 C8.6 12.4 7.4 11.5 7 10.5 C6.6 11.5 5.4 12.4 3.8 12.4 C1.9 12.4 1.1 11.4 1.3 9.1Z" fill="#fff"/><path d="M3.3 13.3 H24.5 V24.6 H20.9 V15.3 H16.2 V24.6 H3.3Z M7.1 15.3 V19.8 H13 V15.3Z" fill="#fff" fill-rule="evenodd"/></svg>
<svg style="position:absolute;left:735px;top:6px;" width="24" height="22" viewBox="0 0 24 22"><path d="M3 6 V19 Q3 20.3 4.3 20.3 H17" fill="none" stroke="#fff" stroke-width="1.9"/><rect x="5.8" y="1.9" width="14.2" height="14.5" rx="1.8" fill="#fff"/><path d="M12.9 4.6 V13.5 M8.5 9.1 H17.4" stroke="#4f7fb5" stroke-width="1.9"/></svg>
<svg style="position:absolute;left:1318px;top:18px;" width="16" height="16" viewBox="0 0 16 16"><circle cx="7" cy="7" r="4.6" fill="none" stroke="#2d3e5c" stroke-width="2.1"/><path d="M10.4 10.4 L14 14" stroke="#2d3e5c" stroke-width="2.4" stroke-linecap="round"/></svg>
<svg style="position:absolute;left:1371px;top:11px;" width="20" height="24" viewBox="0 0 20 24"><path d="M3.1 4 Q3.1 2.7 4.4 2.7 H15.6 Q16.9 2.7 16.9 4 V21.1 L10 16.9 L3.1 21.1Z" fill="none" stroke="#fff" stroke-width="2.2" stroke-linejoin="round"/></svg>
<svg style="position:absolute;left:1402px;top:11px;" width="26" height="25" viewBox="0 0 26 25"><path d="M4.3 14.6 A8.4 8.4 0 1 0 7.4 5.9" fill="none" stroke="#fff" stroke-width="2.1"/><path d="M2.9 2.7 L2.9 10.6 L10.3 10.6Z" fill="#fff"/><path d="M12.6 8.2 V13.6 L9.1 15.8" fill="none" stroke="#fff" stroke-width="2" stroke-linecap="round"/></svg>
<svg style="position:absolute;left:1435px;top:11px;" width="26" height="26" viewBox="0 0 26 26"><circle cx="12.6" cy="12.7" r="9.8" fill="none" stroke="#fff" stroke-width="2.1"/><path d="M9.4 9.9 C9.4 7.9 10.9 6.9 12.6 6.9 C14.4 6.9 15.8 8.1 15.8 9.7 C15.8 11.9 13.3 12.3 13.3 14.3 V14.9" fill="none" stroke="#fff" stroke-width="2"/><rect x="11.9" y="16.5" width="2.7" height="2.7" fill="#fff"/></svg>
<svg style="position:absolute;left:1469px;top:12.7px;" width="22" height="22" viewBox="0 0 22 22"><polygon points="8.13,1.00 13.87,1.00 14.09,4.06 15.47,4.85 18.22,3.52 21.09,8.48 18.56,10.21 18.56,11.79 21.09,13.52 18.22,18.48 15.47,17.15 14.09,17.94 13.87,21.00 8.13,21.00 7.91,17.94 6.53,17.15 3.78,18.48 0.91,13.52 3.44,11.79 3.44,10.21 0.91,8.48 3.78,3.52 6.53,4.85 7.91,4.06" fill="#fff" stroke="#fff" stroke-width="1.2" stroke-linejoin="round"/><circle cx="11" cy="11" r="3.6" fill="#4f7fb5"/></svg>
<svg style="position:absolute;left:266px;top:90px;" width="12" height="13" viewBox="0 0 12 13"><path d="M7.5 3.4 L4.2 6.5 L7.5 9.6" fill="none" stroke="#333" stroke-width="1.4"/></svg>
<svg style="position:absolute;left:280.5px;top:178px;" width="8" height="14" viewBox="0 0 8 14"><path d="M0.8 5.8 L4 0.6 L7.2 5.8Z M0.8 8 L7.2 8 L4 13.1Z" fill="#111"/></svg>
<svg style="position:absolute;left:514px;top:257.5px;" width="8" height="14" viewBox="0 0 8 14"><path d="M0.8 5.8 L4 0.6 L7.2 5.8Z M0.8 8 L7.2 8 L4 13.1Z" fill="#111"/></svg>
<svg style="position:absolute;left:1479.5px;top:143.5px;" width="8" height="14" viewBox="0 0 8 14"><path d="M0.8 5.8 L4 0.6 L7.2 5.8Z M0.8 8 L7.2 8 L4 13.1Z" fill="#111"/></svg>
<svg style="position:absolute;left:315px;top:120px;" width="16" height="13" viewBox="0 0 16 13"><rect x="1.6" y="1.6" width="13" height="9.6" rx="1" fill="none" stroke="#888" stroke-width="1.3"/><path d="M1.8 2.6 L8.1 7.7 L14.4 2.6" fill="none" stroke="#888" stroke-width="1.3"/></svg>
<svg style="position:absolute;left:492px;top:119px;" width="14" height="13" viewBox="0 0 14 13"><path d="M2.6 1.8 C1.6 2.4 1.3 3.7 1.9 5 C3.3 8.3 5.6 10.6 8.9 11.9 C10.1 12.3 11.4 12 12 11 L12.4 10.4 L9.7 8.3 L8.5 9.3 C6.8 8.6 5.4 7.1 4.7 5.4 L5.6 4.2 L3.6 1.2Z" fill="#888"/></svg>
<svg style="position:absolute;left:318px;top:144px;" width="10" height="14" viewBox="0 0 10 14"><path d="M5 1 C2.6 1 1 2.8 1 5 C1 7.6 3.6 9.6 5 12.9 C6.4 9.6 9 7.6 9 5 C9 2.8 7.4 1 5 1Z M5 3.2 A1.8 1.8 0 1 0 5 6.8 A1.8 1.8 0 1 0 5 3.2Z" fill="#888" fill-rule="evenodd"/></svg>
<svg style="position:absolute;left:1054px;top:89px;" width="15" height="13" viewBox="0 0 15 13"><circle cx="3.4" cy="10.1" r="1.7" fill="#333"/><path d="M2.2 5.6 A5.6 5.6 0 0 1 7.6 11.4" fill="none" stroke="#333" stroke-width="1.9"/><path d="M2.2 1.8 A9.4 9.4 0 0 1 11.6 11.4" fill="none" stroke="#333" stroke-width="1.9"/></svg>
<svg style="position:absolute;left:1137px;top:90px;" width="16" height="13" viewBox="0 0 16 13"><rect x="1.6" y="1.4" width="13" height="9.6" rx="1" fill="none" stroke="#333" stroke-width="1.3"/><path d="M1.8 2.4 L8.1 7.5 L14.4 2.4" fill="none" stroke="#333" stroke-width="1.3"/></svg>
<svg style="position:absolute;left:1264px;top:89px;" width="17" height="13" viewBox="0 0 17 13"><path d="M9 2.3 H3 Q1.7 2.3 1.7 3.6 V10.3 Q1.7 11.6 3 11.6 H9.8 Q11.1 11.6 11.1 10.3 V7.3" fill="none" stroke="#333" stroke-width="1.3"/><path d="M6.6 8.7 L7.3 6.3 L13.1 0.9 L15 2.8 L9.2 8.2Z" fill="#333"/></svg>
<svg style="position:absolute;left:1363px;top:89px;" width="15" height="14" viewBox="0 0 15 14"><path d="M3.8 1.4 H9.6 L11.3 3.1 V5.4 H3.8Z" fill="none" stroke="#333" stroke-width="1.4"/><path d="M1 5.4 H14 V10.6 H1Z" fill="#333"/><path d="M3.8 8.6 H11.3 V12.6 H3.8Z" fill="#fff" stroke="#333" stroke-width="1.4"/></svg>
<svg style="position:absolute;left:786px;top:188px;" width="19" height="17" viewBox="0 0 19 17"><path d="M8.3 3.6 H3.6 Q1.6 3.6 1.6 5.6 V12.6 Q1.6 14.6 3.6 14.6 H10.8 Q12.8 14.6 12.8 12.6 V9.2" fill="none" stroke="#111" stroke-width="1.6" stroke-linecap="round"/><path d="M8.2 10.3 L15.2 3.2" stroke="#111" stroke-width="1.9" stroke-linecap="round"/><path d="M10.2 1.7 H16.5 V8 Z" fill="#111"/></svg>
<svg style="position:absolute;left:1122px;top:364px;" width="16" height="17" viewBox="0 0 16 17"><circle cx="8" cy="8.5" r="4.6" fill="none" stroke="#4a78b0" stroke-width="1.7"/><path d="M11.3 11.8 L14.4 14.9" stroke="#4a78b0" stroke-width="1.9" stroke-linecap="round"/></svg>
<svg style="position:absolute;left:1122px;top:440px;" width="16" height="17" viewBox="0 0 16 17"><circle cx="8" cy="8.5" r="4.6" fill="none" stroke="#4a78b0" stroke-width="1.7"/><path d="M11.3 11.8 L14.4 14.9" stroke="#4a78b0" stroke-width="1.9" stroke-linecap="round"/></svg>
<svg style="position:absolute;left:1122px;top:516px;" width="16" height="17" viewBox="0 0 16 17"><circle cx="8" cy="8.5" r="4.6" fill="none" stroke="#4a78b0" stroke-width="1.7"/><path d="M11.3 11.8 L14.4 14.9" stroke="#4a78b0" stroke-width="1.9" stroke-linecap="round"/></svg>
<svg style="position:absolute;left:1122px;top:592px;" width="20" height="16" viewBox="0 0 20 16"><circle cx="7.3" cy="5.7" r="2.9" fill="#4a78b0"/><path d="M2.2 14.8 V12.3 Q2.2 9.1 5.3 9.1 H9.4 Q11.6 9.1 11.6 11.3 V14.8Z" fill="#4a78b0"/><path d="M14 7.1 V14.8 M10 10.9 H17.9" stroke="#4a78b0" stroke-width="1.7"/></svg>
<svg style="position:absolute;left:622px;top:556px;" width="14" height="18" viewBox="0 0 14 18"><path d="M3 1.6 L3 12.4 L5.6 10.2 L7.9 15.6 L9.9 14.8 L7.7 9.7 L11.1 9.7Z" fill="#000" stroke="#fff" stroke-width="0.5" stroke-linejoin="round"/></svg>
</body></html>
